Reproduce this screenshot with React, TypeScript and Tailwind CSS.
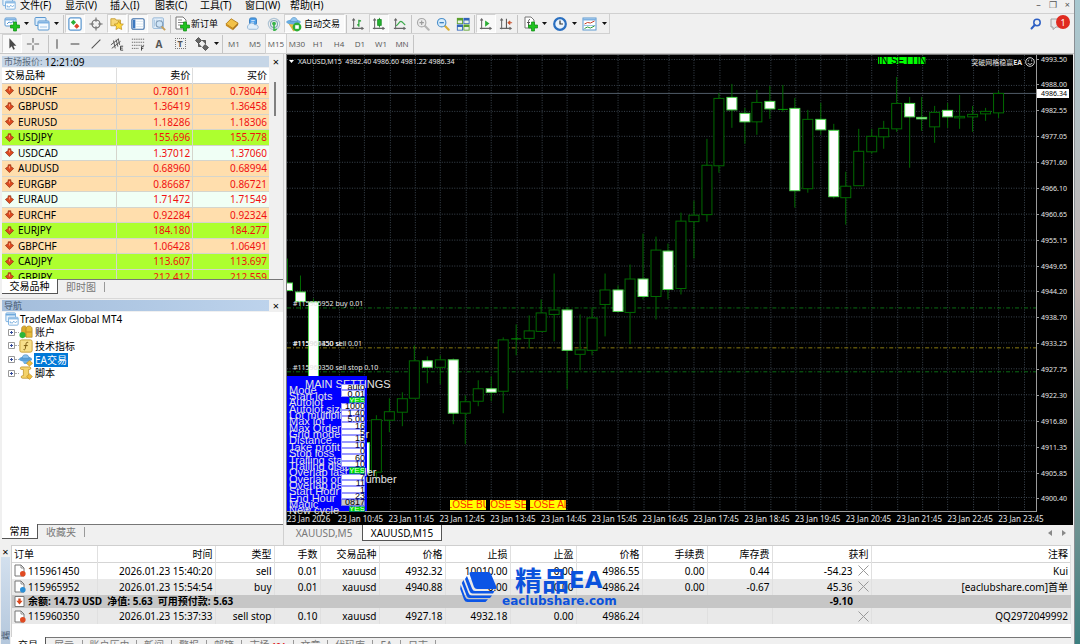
import React from "react";

const MENU = ["文件(F)", "显示(V)", "插入(I)", "图表(C)", "工具(T)", "窗口(W)", "帮助(H)"];

type Quote = [string, string, string, "down" | "jpy" | "flat"];
const QUOTES: Quote[] = [
  ["USDCHF", "0.78011", "0.78044", "down"],
  ["GBPUSD", "1.36419", "1.36458", "down"],
  ["EURUSD", "1.18286", "1.18306", "down"],
  ["USDJPY", "155.696", "155.778", "jpy"],
  ["USDCAD", "1.37012", "1.37060", "flat"],
  ["AUDUSD", "0.68960", "0.68994", "down"],
  ["EURGBP", "0.86687", "0.86721", "down"],
  ["EURAUD", "1.71472", "1.71549", "flat"],
  ["EURCHF", "0.92284", "0.92324", "down"],
  ["EURJPY", "184.180", "184.277", "jpy"],
  ["GBPCHF", "1.06428", "1.06491", "down"],
  ["CADJPY", "113.607", "113.697", "jpy"],
  ["GBPJPY", "212.412", "212.559", "jpy"],
];
const QUOTE_BG = { down: "bg-[#ffdead]", jpy: "bg-[#adff2f]", flat: "bg-[#f0fff5]" };

// body top, body bottom, wick top, wick bottom, filled
type Candle = [number, number, number, number, number] | null;
const CANDLES: Candle[] = [
  [283, 291, 259, 291, 1], [292, 302, 276, 310, 1], [302, 430, 299, 440, 1], null, null, null,
  [443, 474, 443, 476, 1], [420, 473, 416, 484, 0], [412, 421, 399, 433, 0], [399, 413, 393, 427, 0],
  [361, 399, 346, 399, 0], [361, 368, 357, 384, 1], [360, 368, 356, 385, 0], [360, 414, 359, 425, 1],
  [402, 414, 396, 445, 0], [389, 402, 381, 407, 0], [389, 393, 377, 402, 1], [340, 392, 338, 414, 0],
  [339, 339, 325, 356, 0], [331, 339, 316, 349, 0], [313, 332, 300, 332, 0], [310, 315, 274, 342, 0],
  [310, 351, 308, 390, 1], [350, 355, 315, 371, 0], [318, 351, 308, 356, 0], [290, 305, 274, 337, 0],
  [290, 312, 286, 313, 1], [279, 313, 265, 345, 0], [279, 297, 234, 300, 1], [250, 297, 237, 320, 0],
  [251, 290, 244, 300, 1], [221, 289, 213, 295, 0], [215, 222, 201, 259, 0], [165, 215, 139, 222, 0],
  [98, 166, 93, 173, 0], [97, 110, 84, 128, 1], [113, 122, 108, 144, 1], [102, 122, 90, 135, 0],
  [101, 109, 86, 119, 1], [109, 109, 85, 112, 0], [108, 191, 98, 208, 1], [119, 189, 110, 193, 0],
  [119, 130, 103, 135, 1], [130, 197, 124, 199, 1], [186, 198, 172, 225, 0], [151, 186, 129, 186, 0],
  [136, 152, 129, 154, 0], [128, 137, 121, 149, 0], [103, 129, 77, 132, 0], [103, 117, 97, 168, 1],
  [117, 119, 97, 131, 1], [112, 127, 106, 143, 0], [110, 117, 103, 128, 1], [116, 118, 95, 129, 0],
  [114, 117, 106, 132, 0], [111, 114, 108, 121, 0], [93, 113, 91, 118, 0],
];

const PRICES = ["4993.50", "4988.00", "4982.55", "4977.05", "4971.60", "4966.10", "4960.65", "4955.15", "4949.65",
  "4944.20", "4938.70", "4933.25", "4927.75", "4922.30", "4916.80", "4911.35", "4905.85", "4900.40"];
const TIMES = ["23 Jan 2026", "23 Jan 10:45", "23 Jan 11:45", "23 Jan 12:45", "23 Jan 13:45", "23 Jan 14:45",
  "23 Jan 15:45", "23 Jan 16:45", "23 Jan 17:45", "23 Jan 18:45", "23 Jan 19:45", "23 Jan 20:45", "23 Jan 21:45",
  "23 Jan 22:45", "23 Jan 23:45"];

const SETTINGS: [string, string][] = [
  ["Mode", "auto"], ["Start lots", "0.01"], ["Autolot", "YES"], ["Autolot size", "1000"], ["Lot multiplier", "1.40"],
  ["Max lot", "5.00"], ["Max Orders", "16"], ["Grid mode order", "5"], ["Distance", "15"], ["Take profit", "10"],
  ["Stop loss", "0"], ["Trailing start", "60"], ["Trailing distan", "10"], ["Overlap last order", "YES"],
  ["Overlap order number", "7"], ["Overlap perce", "11"], ["Start Hour", "1"], ["End Hour", "23"], ["Magic", "0817"],
  ["New cycle", "YES"],
];

function Ico({ children, big }: { children: React.ReactNode; big?: boolean }) {
  return (
    <svg viewBox="0 0 16 16" className={big ? "size-4 shrink-0" : "size-3.5 shrink-0"} aria-hidden="true">
      {children}
    </svg>
  );
}

const ChartWin = () => (
  <>
    <rect x="1" y="2" width="11" height="8" rx="1" fill="#fff" stroke="#5b97cf" />
    <path d="M1 3.5h11" stroke="#7fb2e2" strokeWidth="2" />
    <path d="M3 8l2-2 2 1 3-2" stroke="#5b97cf" fill="none" />
  </>
);
const Plus = () => <path d="M8.5 8h3V5h3v3h3v3h-3v3h-3v-3h-3z" transform="translate(-2 1)" fill="#1fc21f" stroke="#0b8a12" strokeWidth=".7" />;
const Axes = () => <path d="M3 2v12M1 13h13M1.5 4L3 2l1.5 2M12 11.5l2 1.5-2 1.5" stroke="#666" strokeWidth="1.2" fill="none" />;

const ICONS: Record<string, React.ReactNode> = {
  newChart: <><ChartWin /><Plus /></>,
  profiles: (
    <>
      <rect x="1" y="1.5" width="11" height="8" rx="1" fill="#dcecfa" stroke="#5b97cf" />
      <rect x="4" y="5" width="11" height="9" rx="1" fill="#f6fbff" stroke="#5b97cf" />
      <path d="M4 6.5h11" stroke="#7fb2e2" strokeWidth="2" />
      <path d="M6 11h7" stroke="#9fc5e8" />
    </>
  ),
  market: (
    <>
      <rect x="1" y="1" width="14" height="14" rx="2" fill="#fff" stroke="#5b97cf" strokeWidth="1.4" />
      <path d="M6.200 3l3 3-3 3-3-3z" fill="#2cae35" />
      <path d="M10 7.500l3 3-3 3-3-3z" fill="#e0452a" />
    </>
  ),
  target: (
    <>
      <circle cx="8" cy="8" r="4.6" fill="none" stroke="#666" strokeWidth="1.3" />
      <path d="M8 .5v5M8 10.500v5M.5 8h5M10.500 8h5" stroke="#666" strokeWidth="1.2" />
    </>
  ),
  star: (
    <>
      <path d="M1 2h5l1 1.500h5V10H1z" fill="#f6d777" stroke="#c39a30" />
      <path d="M10 4.500l1.700 3.200 3.600.5-2.600 2.500.7 3.600-3.400-1.700-3.200 1.700.6-3.600-2.600-2.500 3.600-.5z" fill="#ffd83c" stroke="#b98a1c" strokeWidth=".8" />
    </>
  ),
  terminal: (
    <>
      <rect x="1" y="2" width="14" height="12" rx="1.500" fill="#fff" stroke="#3c6ea8" strokeWidth="1.300" />
      <rect x="2" y="3" width="3" height="10" fill="#3c78c0" />
      <path d="M6 5h8M6 8h8M6 11h8" stroke="#d5e3f0" />
    </>
  ),
  tester: (
    <>
      <rect x="1" y="1" width="12" height="12" rx="1" fill="#e7f1fa" stroke="#86aed4" />
      <path d="M3 3v8M5.500 3v8M11 3v4" stroke="#9fc1e0" />
      <circle cx="8.500" cy="8" r="3.800" fill="#cfe5f7" stroke="#7d99b5" strokeWidth="1.200" />
      <path d="M11 11l4 4" stroke="#c8a05a" strokeWidth="2.200" />
    </>
  ),
  order: (
    <>
      <path d="M2 1h7l3 3v9H2z" fill="#fff" stroke="#777" />
      <path d="M4 4h4M4 6.500h6M4 9h3" stroke="#888" />
      <Plus />
    </>
  ),
  gold: (
    <>
      <path d="M1 8l6-6 8 5-6 6z" fill="#f2c148" stroke="#b07a16" />
      <path d="M1 8l8 5v2L1 10z" fill="#c98b1c" />
      <path d="M9 13l6-6v2l-6 6z" fill="#a86d10" />
    </>
  ),
  person: (
    <>
      <rect x="4" y="1" width="8" height="8" rx="2" fill="#4f9fe8" stroke="#2f78bd" />
      <path d="M6 4h4M6 6h3" stroke="#d8ecff" />
      <path d="M3 14a3 3 0 010-5 4 4 0 017 0 3 3 0 014 2.500A2.500 2.500 0 0112 14z" fill="#e2effa" stroke="#8fb3d6" />
    </>
  ),
  signal: (
    <>
      <circle cx="8" cy="8" r="6.500" fill="none" stroke="#b0c4d4" strokeWidth="1.300" />
      <circle cx="8" cy="8" r="4" fill="none" stroke="#7aa5b5" strokeWidth="1.300" />
      <circle cx="8" cy="7.500" r="2.200" fill="#39b54a" />
      <path d="M8 8v7.500a6 6 0 003-2" stroke="#39b54a" strokeWidth="1.800" fill="none" />
    </>
  ),
  auto: (
    <>
      <path d="M2.500 7h10l-1 5-4 3z" fill="#f0bd3e" stroke="#c8951d" strokeWidth=".6" />
      <ellipse cx="7.500" cy="6" rx="7.300" ry="2.600" fill="#69ace0" />
      <path d="M4.500 5.500C5 2.500 6 1.500 8 1.500s3 1 3.500 4z" fill="#8fc4ee" stroke="#4d8ec5" strokeWidth=".6" />
      <circle cx="11" cy="11" r="4.400" fill="#2cae35" />
      <rect x="9.200" y="9.200" width="3.600" height="3.600" fill="#fff" />
    </>
  ),
  bars: <><Axes /><path d="M9 3v8M7 9h2M9 4.500h2.500" stroke="#1a9c2a" strokeWidth="1.300" /></>,
  candle: <><Axes /><path d="M8.500 1v11" stroke="#168a22" /><rect x="6.500" y="3" width="4" height="6.500" fill="#25b52f" stroke="#168a22" /></>,
  line: <><Axes /><path d="M3.500 10C6 9 7 5 9 5s3 3 5 4" stroke="#3aa84a" strokeWidth="1.300" fill="none" /></>,
  zoomIn: (
    <>
      <path d="M10 10l4.500 4.500" stroke="#b5b5b5" strokeWidth="2.400" strokeLinecap="round" />
      <circle cx="6.500" cy="6.500" r="4.800" fill="#ececec" stroke="#a8a8a8" strokeWidth="1.300" />
      <path d="M4 6.500h5M6.500 4v5" stroke="#9a9a9a" strokeWidth="1.300" />
    </>
  ),
  zoomOut: (
    <>
      <path d="M10 10l4.500 4.500" stroke="#d9ad33" strokeWidth="2.400" strokeLinecap="round" />
      <circle cx="6.500" cy="6.500" r="4.800" fill="#d8edfb" stroke="#4b8fca" strokeWidth="1.300" />
      <path d="M4 6.500h5" stroke="#2f78bd" strokeWidth="1.400" />
    </>
  ),
  tile: (
    <>
      <rect x="1" y="1" width="7" height="7" fill="#5a9e2c" /><rect x="8.500" y="1" width="7" height="7" fill="#2f62b8" />
      <rect x="1" y="8.500" width="7" height="7" fill="#2f62b8" /><rect x="8.500" y="8.500" width="7" height="7" fill="#5a9e2c" />
      <path d="M2 4h5v3H2zM9.500 4h5v3h-5zM2 11.500h5v3H2zM9.500 11.500h5v3h-5z" fill="#e9f3e6" />
    </>
  ),
  scroll: <><Axes /><path d="M7 4v7l5-3.500z" fill="#2cae35" /></>,
  shift: <><Axes /><path d="M8.500 2v11" stroke="#555" strokeWidth="1.200" /><path d="M15 6.500h-4M12.500 4.500l-2.500 2 2.500 2z" stroke="#c8502a" fill="#c8502a" /></>,
  indicator: (
    <>
      <path d="M3 1h6l3 3v8H3z" fill="#fff" stroke="#777" />
      <path d="M8 3.500c-1.500 0-1.500 1-1.500 2v5M5 6.500h3" stroke="#555" fill="none" />
      <Plus />
    </>
  ),
  clock: (
    <>
      <circle cx="8" cy="8" r="5.800" fill="#eaf4fd" stroke="#2a6fc0" strokeWidth="2.200" />
      <path d="M8 4.500V8h3" stroke="#333" strokeWidth="1.200" fill="none" />
    </>
  ),
  template: (
    <>
      <rect x="1" y="2" width="13" height="12" fill="#fff" stroke="#5b97cf" />
      <path d="M1 3.500h13" stroke="#7fb2e2" strokeWidth="2" />
      <path d="M2.500 8l3-1.500 3 .5 4-2" stroke="#c8402a" fill="none" />
      <path d="M1 9.500h13" stroke="#9ec3e4" />
      <path d="M2.500 12.500l3-1.500 3 1 4-2" stroke="#2a9c3a" fill="none" />
    </>
  ),
  cursor: <path d="M5 1.500v11.500l2.700-2.500 1.800 4 1.800-.9-1.800-3.700H13z" fill="#4a4a4a" />,
  cross: <path d="M8 1v5.500M8 9.500V15M1 8h5.500M9.500 8H15" stroke="#666" strokeWidth="1.300" />,
  vline: <path d="M8 2.500v11" stroke="#555" strokeWidth="1.300" />,
  hline: <path d="M3 8h10" stroke="#555" strokeWidth="1.300" />,
  trend: <path d="M3 13L13 3" stroke="#555" strokeWidth="1.200" />,
  equi: (
    <>
      <path d="M1 9l9-7M2 13l10-8M4 4l2 9M7 3l2 8M9.500 2l1.500 7" stroke="#555" strokeWidth="1.100" fill="none" />
      <path d="M15 10.500h-3v4.500h3M12 12.700h2.500" stroke="#333" fill="none" />
    </>
  ),
  fibo: (
    <>
      <path d="M1 2.500h14M1 6h14M1 9.500h14M1 13h8" stroke="#666" strokeWidth="1.100" strokeDasharray="1.500 1" />
      <path d="M14.500 11h-2.500v4.500M12 13h2" stroke="#333" fill="none" />
    </>
  ),
  tool: <path d="M4.500 1.500l3 3-3 3-3-3zM11 8.500l3.500 3-3 3-3-3zM4.500 7v3.500h3M8 4.500h3.500V8" stroke="#444" fill="#555" fillOpacity=".9" strokeWidth=".8" />,
  logo: (
    <>
      <rect x="1" y="1" width="11" height="10" rx="1" fill="#e8f3fc" stroke="#6fa8dc" />
      <path d="M1 3h11" stroke="#6fa8dc" strokeWidth="2" />
      <rect x="4" y="6" width="11" height="9" rx="1" fill="#fff" stroke="#6fa8dc" />
      <path d="M4 7.500h11" stroke="#8fbde6" strokeWidth="2" />
      <path d="M6 13v-2l2 2 2-2.500 2 2 1.500-2" stroke="#6fa8dc" fill="none" />
    </>
  ),
  accounts: (
    <>
      <path d="M3 13V4c0-4 6-4 6 0v9z" fill="#d9a92c" stroke="#a87b14" strokeWidth=".7" />
      <path d="M8 14V4.500c0-4.500 7-4.500 7 0V14z" fill="#e8bc3c" stroke="#a87b14" strokeWidth=".7" />
      <path d="M8.500 8h6" stroke="#a87b14" strokeWidth=".8" />
      <circle cx="4" cy="11.500" r="3.500" fill="#2cb53a" />
    </>
  ),
  func: (
    <>
      <rect x="1" y="1" width="14" height="14" rx="2" fill="#f7df8a" stroke="#c39a30" />
      <path d="M10.500 4c-2-.8-2.300.5-2.500 2l-.8 5c-.2 1.300-1 1.500-2 1M5.500 7.500h4.500" stroke="#7a5b10" strokeWidth="1.100" fill="none" />
    </>
  ),
  hat: (
    <>
      <ellipse cx="7.500" cy="7" rx="7.300" ry="3" fill="#58a0da" />
      <path d="M3.500 6C4 3 5 2 7.500 2S11 3 11.500 6z" fill="#8cc3ee" stroke="#4586bd" strokeWidth=".7" />
      <path d="M4 9.500h7l-1 3H6z" fill="#6fb0e2" />
      <path d="M12 8.500l3.500 3.200L12 15l-3.500-3.300z" fill="#f0bd3e" stroke="#b98a1c" strokeWidth=".7" />
    </>
  ),
  script: (
    <>
      <path d="M3 1h9c2 0 2 3 0 3h-1v6l2 4H4c-2 0-2-3 0-3h1V4H3c-2 0-2-3 0-3z" fill="#f3d26a" stroke="#b98a1c" strokeWidth=".8" />
      <path d="M12 9l3.300 3L12 15.300 8.700 12z" fill="#f0bd3e" stroke="#b98a1c" strokeWidth=".7" />
    </>
  ),
};

function Caret() {
  return (
    <svg viewBox="0 0 5 3" className="h-[3px] w-[5px] shrink-0" aria-hidden="true">
      <path d="M0 0h5L2.500 3z" fill="#111" />
    </svg>
  );
}

function Tool({ icon, label, active, menu }: { icon: string; label: string; active?: boolean; menu?: boolean }) {
  return (
    <button
      type="button"
      aria-label={label}
      className={
        "flex h-[19px] shrink-0 items-center " +
        (menu ? "w-[30px] gap-1 pl-[3px] " : "w-5 justify-center ") +
        (active ? "border border-[#d2d2d2] border-r-white border-b-white bg-[#f9f9f9]" : "")
      }
    >
      <Ico big={menu}>{ICONS[icon]}</Ico>
      {menu && <Caret />}
    </button>
  );
}

const Sep = () => <div className="mx-px h-[18px] w-px shrink-0 bg-[#c4c4c4]" />;

function Toolbars() {
  return (
    <>
      <div className="flex h-[21px] shrink-0 items-center border-t border-[#d0d0d0]">
        <div className="flex h-full items-center border-r border-b border-[#d0d0d0] pl-px">
          <Tool icon="newChart" label="新图表" menu />
          <Tool icon="profiles" label="配置" menu />
          <div className="w-px" />
          <Sep />
          <div className="flex gap-px">
            <Tool icon="market" label="市场报价" active />
            <Tool icon="target" label="数据窗口" />
            <Tool icon="star" label="导航" active />
            <Tool icon="terminal" label="终端" active />
            <Tool icon="tester" label="策略测试" />
          </div>
          <Sep />
          <button type="button" className="flex h-[19px] w-[50px] items-center gap-px pl-0.5 text-[9px] leading-none whitespace-nowrap">
            <Ico big>{ICONS.order}</Ico>新订单
          </button>
          <div className="flex gap-px">
            <Tool icon="gold" label="MetaEditor" />
            <Tool icon="person" label="社区" />
            <Tool icon="signal" label="信号" />
          </div>
          <button type="button" className="flex h-[19px] w-[61px] items-center gap-0.5 border border-[#d2d2d2] border-r-white border-b-white bg-[#f9f9f9] pl-px text-[9px] leading-none whitespace-nowrap">
            <Ico big>{ICONS.auto}</Ico>自动交易
          </button>
          <Sep />
          <div className="flex gap-px">
            <Tool icon="bars" label="柱状图" />
            <Tool icon="candle" label="蜡烛图" active />
            <Tool icon="line" label="折线图" />
          </div>
          <Sep />
          <div className="flex">
            <Tool icon="zoomIn" label="放大" />
            <Tool icon="zoomOut" label="缩小" />
            <Tool icon="tile" label="平铺" />
          </div>
          <Sep />
          <div className="flex">
            <Tool icon="scroll" label="自动滚动" active />
            <Tool icon="shift" label="图表平移" />
          </div>
          <Sep />
          <Tool icon="indicator" label="指标" menu />
          <Tool icon="clock" label="周期" menu />
          <Tool icon="template" label="模板" menu />
        </div>
        <div className="ml-auto flex items-center gap-2 pr-1">
          <button type="button" aria-label="搜索">
            <svg viewBox="0 0 12 12" className="size-3" aria-hidden="true">
              <circle cx="7" cy="4.500" r="3.200" fill="none" stroke="#2d5fc4" strokeWidth="1.500" />
              <path d="M4.700 7L1.500 10.500" stroke="#2d5fc4" strokeWidth="2" strokeLinecap="round" />
            </svg>
          </button>
          <button type="button" aria-label="消息" className="relative flex h-[18px] w-5 items-center">
            <svg viewBox="0 0 14 12" className="h-3 w-3.5" aria-hidden="true">
              <path d="M1 1h12v8H6l-3 2.500V9H1z" fill="#e8e8e8" stroke="#a0a0a0" />
            </svg>
            <span className="absolute top-0 right-0 flex size-[14px] items-center justify-center rounded-full bg-[#e02b20] text-[9px] leading-none text-white">1</span>
          </button>
        </div>
      </div>
      <div className="flex h-[20px] shrink-0 items-center border-b border-[#c8c8c8] pl-0.5">
        <div className="flex items-center gap-px">
          <Tool icon="cursor" label="光标" active />
          <Tool icon="cross" label="十字线" />
        </div>
        <div className="w-1" />
        <Sep />
        <div className="flex items-center gap-px">
          <button type="button" aria-label="垂直线" className="flex h-[19px] w-3.5 items-center justify-center">
            <Ico>{ICONS.vline}</Ico>
          </button>
          <Tool icon="hline" label="水平线" />
          <Tool icon="trend" label="趋势线" />
          <Tool icon="equi" label="等距通道" />
          <Tool icon="fibo" label="斐波纳契" />
          <button type="button" className="w-5 text-[10px] leading-none font-bold text-[#555]">A</button>
          <button type="button" aria-label="文字标签" className="flex w-5 justify-center">
            <span className="flex size-[11px] items-center justify-center border border-dotted border-[#777] text-[9px] leading-none font-bold text-[#555]">T</span>
          </button>
          <Tool icon="tool" label="箭头" menu />
        </div>
        <Sep />
        <div className="flex items-center gap-px">
          {["M1", "M5", "M15", "M30", "H1", "H4", "D1", "W1", "MN"].map((p) => (
            <button
              key={p}
              type="button"
              className={
                "h-[19px] w-5 text-center font-['Open_Sans','Noto_Sans',sans-serif] text-[8px] leading-none font-medium text-[#555] " +
                (p === "M15" ? "bg-[#f9f9f9] outline outline-[#d2d2d2]" : "")
              }
            >
              {p}
            </button>
          ))}
        </div>
        <Sep />
      </div>
    </>
  );
}

function PanelTitle({ children, tone }: { children: React.ReactNode; tone: string }) {
  return (
    <div className="flex h-[13px] shrink-0 items-center">
      <div className={"flex h-[11px] flex-1 items-center pl-0.5 text-[9px] leading-none whitespace-pre " + tone}>{children}</div>
      <button type="button" aria-label="关闭" className="w-[14px] text-center text-[11px] leading-none">×</button>
    </div>
  );
}

function Tabs({ active, rest, width }: { active: string; rest: string; width: string }) {
  return (
    <div className="flex h-[15px] shrink-0 text-[10px] leading-none">
      <button type="button" className={"border-r border-b border-[#555] bg-white " + width}>{active}</button>
      <div className="flex flex-1 items-center border-t border-[#777]">
        <button type="button" className="border-r border-[#999] px-2 text-[#777]">{rest}</button>
      </div>
    </div>
  );
}

function MarketWatch() {
  return (
    <section className="flex h-[240px] shrink-0 flex-col pt-px pl-0.5">
      <PanelTitle tone="bg-[#c6d6e7] text-[#5a6a7c]">
        市场报价: <span className="text-[10px] text-black">12:21:09</span>
      </PanelTitle>
      <div className="flex min-h-0 flex-1 overflow-hidden bg-[#f0f0f0]">
        <div className="min-w-0 flex-1">
          <table className="h-[217px] w-full table-fixed border-collapse bg-white text-[10px] leading-none">
            <colgroup>
              <col className="w-[114px]" />
              <col className="w-[76px]" />
              <col className="w-[76px]" />
            </colgroup>
            <thead>
              <tr className="h-[15px] border-b border-[#ccc]">
                <th className="border-r border-[#ddd] p-0 pl-[3px] text-left font-normal">交易品种</th>
                <th className="border-r border-[#ddd] p-0 pr-0.5 text-right font-normal">卖价</th>
                <th className="p-0 pr-0.5 text-right font-normal">买价</th>
              </tr>
            </thead>
            <tbody>
              {QUOTES.map(([s, bid, ask, kind]) => (
                <tr key={s} className={"border-b border-[#d5d5cc] " + QUOTE_BG[kind]}>
                  <td className="border-r border-[#d5d5cc] p-0 pl-[3px]">
                    <span className="flex items-center gap-1">
                      <svg viewBox="0 0 9 9" className="size-[9px]" aria-hidden="true">
                        <path d="M3.200.8h2.600v1.700L8.600 4.500 4.500 8.600.4 4.500l2.800-2z" fill="#dd4a20" stroke="#8e2c10" strokeWidth=".7" />
                        <path d="M4.500 2v2.500" stroke="#ff9a70" />
                      </svg>
                      {s}
                    </span>
                  </td>
                  <td className="border-r border-[#d5d5cc] p-0 pr-0.5 text-right text-[#f01010]">{bid}</td>
                  <td className="p-0 pr-0.5 text-right text-[#f01010]">{ask}</td>
                </tr>
              ))}
            </tbody>
          </table>
        </div>
        <div className="w-[14px] shrink-0 pt-[14px]">
          <div className="ml-[5px] h-[34px] w-0.5 bg-[#808080]" />
        </div>
      </div>
      <Tabs active="交易品种" rest="即时图" width="w-14" />
    </section>
  );
}

const TREE: [string, string, boolean][] = [
  ["accounts", "账户", false],
  ["func", "技术指标", false],
  ["hat", "EA交易", true],
  ["script", "脚本", false],
];

function Navigator() {
  return (
    <section className="mt-1 flex min-h-0 flex-1 flex-col border-t border-[#d8d8d8] pl-0.5">
      <PanelTitle tone="bg-linear-to-r from-[#a3bddb] to-[#bdd3ec] text-[#44566b]">导航</PanelTitle>
      <div className="min-h-0 flex-1 bg-white">
        <ul className="grid h-[68px] grid-rows-5 pl-[3px] text-[10px] leading-none">
          <li className="flex items-center gap-px">
            <Ico>{ICONS.logo}</Ico>TradeMax Global MT4
          </li>
          {TREE.map(([icon, name, on]) => (
            <li key={name} className="flex items-center pl-[3px]">
              <svg viewBox="0 0 7 7" className="size-[7px]" aria-hidden="true">
                <path d="M.5.5h6v6h-6z" fill="#fff" stroke="#999" />
                <path d="M2 3.500h3M3.500 2v3" stroke="#334a9a" />
              </svg>
              <span className="w-1 border-t border-dotted border-[#aaa]" />
              <svg viewBox="0 0 16 16" className="size-[14px] shrink-0" aria-hidden="true">{ICONS[icon]}</svg>
              <span className={on ? "ml-px bg-[#0078d7] px-px py-0.5 text-white" : "ml-0.5"}>{name}</span>
            </li>
          ))}
        </ul>
      </div>
      <Tabs active="常用" rest="收藏夹" width="w-9" />
    </section>
  );
}

function Plot() {
  const cols = Array.from({ length: 29 }, (_, i) => Math.round(313.3 + i * 25.4) + 0.5);
  const rows = PRICES.map((_, i) => Math.round(59 + i * 25.83) + 0.5);
  return (
    <svg viewBox="287 55 750 457" preserveAspectRatio="none" className="absolute inset-0 size-full" aria-hidden="true">
      <g stroke="#3b454f" strokeDasharray="1 1.500">
        {cols.map((x) => <path key={x} d={`M${x} 55V512`} />)}
        {rows.map((y) => <path key={y} d={`M287 ${y}H1037`} />)}
      </g>
      <path d="M287 93.500H1037" stroke="#505c68" />
      <path d="M287 308.500H1037M287 372.500H1037" stroke="#0b6b14" strokeDasharray="4 2 1 2" />
      <path d="M287 348.500H1037" stroke="#8b7c12" strokeDasharray="4 2 1 2" />
      {CANDLES.map((c, i) => {
        if (!c) return null;
        const x = Math.round(287.4 + i * 12.7) + 0.5;
        const [top, bottom, high, low, filled] = c;
        return (
          <g key={i} stroke={filled ? "#4fd84f" : "#006a00"}>
            <path d={`M${x} ${high}V${low}`} stroke="#006a00" />
            {bottom - top < 1 ? (
              <path d={`M${x - 5} ${top + 0.5}h10`} stroke="#00a000" />
            ) : (
              <rect x={x - 5} y={top + 0.5} width="10" height={bottom - top - 0.5} fill={filled ? "#fff" : "#000"} />
            )}
          </g>
        );
      })}
    </svg>
  );
}

function SettingsPanel() {
  return (
    <div className="absolute top-[321px] bottom-0 left-0 w-20 bg-[#0000ff] font-['Liberation_Sans',Arial,sans-serif] text-[11px] text-[#e4e4e4]">
      <div className="absolute top-[2px] left-[18px] leading-3 whitespace-nowrap">MAIN SETTINGS</div>
      <div className="absolute top-[11px] left-0.5 grid h-[127px] grid-rows-[repeat(20,minmax(0,1fr))]">
        {SETTINGS.map(([name], i) => (
          <label key={name} htmlFor={`set-${i}`} className="flex h-0 items-center self-center whitespace-nowrap">{name}</label>
        ))}
      </div>
      <div className="absolute top-2 left-[54px] grid h-[128px] w-6 grid-rows-[repeat(20,minmax(0,1fr))] justify-items-end">
        {SETTINGS.map(([name, value], i) => (
          <input
            key={name}
            id={`set-${i}`}
            defaultValue={value}
            className={
              "h-full min-h-0 p-0 text-right leading-none outline -outline-offset-1 outline-[#0000ff]/40 " +
              (value === "YES"
                ? "w-4 bg-[#00e000] text-[8px] text-[#eaffea]"
                : value === "0817"
                  ? "w-full bg-[#c8c8c8] text-[9px] text-black"
                  : "w-full bg-white text-[9px] text-black")
            }
          />
        ))}
      </div>
    </div>
  );
}

function Chart() {
  return (
    <section className="flex min-w-0 flex-1 flex-col">
      <div className="mr-px flex min-h-0 flex-1 flex-col border-t border-l border-[#7a7a7a] bg-black text-[7px] leading-none text-[#e6e6e6]">
        <div className="flex min-h-0 flex-1">
          <div className="relative min-w-0 flex-1 border-r border-b border-[#9a9a9a]">
            <Plot />
            <div className="absolute top-0.5 left-[2px] flex h-2 items-center gap-1 whitespace-pre">
              <svg viewBox="0 0 5 3" className="h-[3px] w-[5px]" aria-hidden="true"><path d="M0 0h5L2.500 3z" fill="#fff" /></svg>
              XAUUSD,M15  4982.40 4986.60 4981.22 4986.34
            </div>
            <div className="absolute top-[2px] right-[110px] flex h-[7px] w-12 items-center justify-center overflow-hidden bg-[#00ff00] font-['Liberation_Sans',sans-serif] text-[10px] whitespace-nowrap text-black">
              MAIN SETTINGS
            </div>
            <div className="absolute top-[2px] right-px flex h-2.5 items-center gap-[3px] text-[7px]">
              <span>突破网格稳赢<b>EA</b></span>
              <svg viewBox="0 0 10 10" className="size-2.5" fill="none" stroke="#e8e8e8" aria-hidden="true">
                <circle cx="5" cy="5" r="4.300" strokeWidth=".9" />
                <path d="M3.300 3.200v1.200M6.700 3.200v1.200M2.800 6c.7 1.800 3.700 1.800 4.400 0" strokeWidth=".9" />
              </svg>
            </div>
            <div className="absolute top-[245px] left-1.5 whitespace-nowrap">#115965952 buy 0.01</div>
            <div className="absolute top-[285px] left-1.5 whitespace-nowrap">#115961450 sell 0.01</div>
            <div className="absolute top-[285px] left-1.5 whitespace-nowrap">#115960350 sl</div>
            <div className="absolute top-[309px] left-1.5 whitespace-nowrap">#115960350 sell stop 0.10</div>
            <SettingsPanel />
            <div className="absolute bottom-px left-[163px] flex gap-1">
              {["CLOSE BUY", "CLOSE SELL", "CLOSE ALL"].map((t) => (
                <button key={t} type="button" className="flex h-2.5 w-9 items-center justify-center overflow-hidden bg-[#ffff00] font-['Liberation_Sans',sans-serif] text-[10px] leading-none whitespace-nowrap text-[#ff2a00]">
                  {t}
                </button>
              ))}
            </div>
          </div>
          <div className="relative flex w-9 shrink-0 flex-col justify-between pb-[9px]">
            {PRICES.map((p) => (
              <div key={p} className="flex h-2 items-center">
                <span className="mr-0.5 h-px w-0.5 bg-[#9a9a9a]" />
                {p}
              </div>
            ))}
            <div className="absolute top-[34px] left-0 flex h-[9px] w-[32px] items-center bg-white pl-1 text-black">4986.34</div>
          </div>
        </div>
        <div className="mr-6 grid h-[13px] shrink-0 grid-cols-[repeat(15,minmax(0,1fr))] items-center text-[8px]">
          {TIMES.map((t) => <span key={t} className="whitespace-nowrap">{t}</span>)}
        </div>
      </div>
      <div className="flex h-5 shrink-0 items-start text-[10px] leading-none">
        <button type="button" className="h-4 w-[76px] text-[#777]">XAUUSD,M5</button>
        <button type="button" className="h-4 w-20 border border-t-0 border-[#555] bg-white">XAUUSD,M15</button>
        <div className="ml-auto flex h-4 items-center gap-2.5 pr-2">
          <svg viewBox="0 0 4 6" className="h-1.5 w-1" aria-hidden="true"><path d="M4 0v6L0 3z" fill="#888" /></svg>
          <svg viewBox="0 0 4 6" className="h-1.5 w-1" aria-hidden="true"><path d="M0 0v6l4-3z" fill="#888" /></svg>
        </div>
      </div>
    </section>
  );
}

const HEAD = ["订单", "时间", "类型", "手数", "交易品种", "价格", "止损", "止盈", "价格", "手续费", "库存费", "获利", "注释"];
const ORDERS: { kind: "sell" | "buy"; cells: string[] }[] = [
  { kind: "sell", cells: ["115961450", "2026.01.23 15:40:20", "sell", "0.01", "xauusd", "4932.32", "10010.00", "0.00", "4986.55", "0.00", "0.44", "-54.23", "Kui"] },
  { kind: "buy", cells: ["115965952", "2026.01.23 15:54:54", "buy", "0.01", "xauusd", "4940.88", "0.00", "0.00", "4986.24", "0.00", "-0.67", "45.36", "[eaclubshare.com]首单"] },
  { kind: "sell", cells: ["115960350", "2026.01.23 15:37:33", "sell stop", "0.10", "xauusd", "4927.18", "4932.18", "0.00", "4986.24", "", "", "", "QQ2972049992"] },
];

function OrderRow({ order, shade }: { order: (typeof ORDERS)[number]; shade: string }) {
  return (
    <tr className={shade}>
      {order.cells.map((v, i) => (
        <td key={i} className={"border-r border-[#e0e0e0] p-0 whitespace-nowrap " + (i ? "pr-0.5 text-right" : "pl-0.5")}>
          {i === 0 ? (
            <span className="flex items-center gap-0.5">
              <svg viewBox="0 0 12 13" className="h-[13px] w-3" aria-hidden="true">
                <path d="M1 1h6l3 3v8H1z" fill="#fff" stroke="#777" />
                <path d="M7 1v3h3" fill="none" stroke="#777" strokeWidth=".8" />
                <circle cx="8.800" cy="9.800" r="2.800" fill={order.kind === "sell" ? "#e04a22" : "#2b8fd6"} />
              </svg>
              {v}
            </span>
          ) : i === 11 ? (
            <span className="flex items-center justify-end gap-[5px]">
              {v}
              <svg viewBox="0 0 11 11" className="size-[11px]" aria-hidden="true"><path d="M.5.5l10 10M10.500.5l-10 10" stroke="#999" /></svg>
            </span>
          ) : (
            v
          )}
        </td>
      ))}
    </tr>
  );
}

const BOTTOM: [string, string][] = [
  ["展示", "w-[37px]"], ["账户历史", "w-[54px]"], ["新闻", "w-[35px]"], ["警报", "w-[35px]"], ["邮箱", "w-[35px]"],
  ["市场", "w-[52px]"], ["文章", "w-[34px]"], ["代码库", "w-[45px]"], ["EA", "w-7"], ["日志", "w-[35px]"],
];

function Terminal() {
  return (
    <section className="relative flex h-[99px] shrink-0 overflow-hidden">
      <div className="flex w-[11px] shrink-0 flex-col">
        <button type="button" aria-label="关闭" className="h-3 text-[11px] leading-none">×</button>
        <div className="relative mr-px ml-px flex-1 overflow-hidden bg-linear-to-b from-[#d3e0ee] to-[#b4c7dc]">
          <span className="absolute top-[74px] left-0 -rotate-90 text-[9px] leading-none text-[#44566b]">端</span>
        </div>
      </div>
      <div className="mr-[3px] flex min-w-0 flex-1 flex-col">
        <div className="h-[92px] shrink-0 border-t border-l border-[#cfcfcf] bg-white">
          <table className="h-[78px] w-full table-fixed border-collapse text-[10px] leading-none">
            <colgroup>
              <col className="w-[85px]" /><col className="w-[118px]" /><col className="w-[59px]" /><col className="w-[46px]" />
              <col className="w-[59px]" /><col className="w-[66px]" /><col className="w-[65px]" /><col className="w-[66px]" />
              <col className="w-[66px]" /><col className="w-[65px]" /><col className="w-[65px]" /><col className="w-[99px]" /><col />
            </colgroup>
            <thead>
              <tr className="h-4 border-b border-[#d5d5d5]">
                {HEAD.map((h, i) => (
                  <th key={i} className={"border-r border-[#e0e0e0] p-0 font-normal whitespace-nowrap " + (i ? "pr-0.5 text-right" : "pl-0.5 text-left")}>{h}</th>
                ))}
              </tr>
            </thead>
            <tbody>
              <OrderRow order={ORDERS[0]} shade="bg-white" />
              <OrderRow order={ORDERS[1]} shade="bg-[#e9e9e9]" />
              <tr className="bg-[#c6c6c6] font-bold">
                <td colSpan={11} className="p-0 pl-0.5">
                  <span className="flex items-center gap-[3px] text-[10px] whitespace-pre">
                    <svg viewBox="0 0 11 11" className="size-[11px]" aria-hidden="true">
                      <path d="M1 .5h9v10H1z" fill="#fff" stroke="#777" />
                      <path d="M4.300 2.500h2.400v2.300h2L5.500 8.500 2.300 4.800h2z" fill="#d9481e" />
                    </svg>
                    余额: 14.73 USD  净值: 5.63  可用预付款: 5.63
                  </span>
                </td>
                <td className="p-0 pr-[18px] text-right">-9.10</td>
                <td className="p-0" />
              </tr>
              <OrderRow order={ORDERS[2]} shade="bg-[#e9e9e9]" />
            </tbody>
          </table>
        </div>
        <div className="flex h-[15px] shrink-0 items-center text-[10px] leading-none text-[#777]">
          <button type="button" className="h-full w-[35px] shrink-0 border-r border-[#555] bg-white text-black">交易</button>
          <div className="flex h-full flex-1 items-center border-t border-[#777]">
            {BOTTOM.map(([t, w]) => (
              <button key={t} type="button" className={"shrink-0 border-r border-[#999] whitespace-nowrap " + w}>
                {t}
                {t === "市场" && <span className="pl-0.5 text-[8px] leading-none font-bold text-[#e02020]">184</span>}
              </button>
            ))}
          </div>
        </div>
      </div>
      <div className="pointer-events-none absolute top-[27px] left-[460px] text-[#0b55dc]">
        <svg viewBox="0 0 38 30" className="h-[30px] w-[38px]" aria-hidden="true">
          <path d="M11 0h17q2 0 3 2l5.500 13q.5 2-1 2H17q-2 0-3-2L9.500 2Q9 0 11 0z" fill="#0b55e6" />
          <path d="M7 4l5 12.500q1 2.500 3 2.500h19.500l-1.500 2.500H12.500q-2 0-3-2.500L5 7z" fill="#0b55e6" />
          <path d="M3.500 8l5 13q1 2.500 3 2.500h20.500L30 26H9.500q-2 0-3-2.500L1.800 11z" fill="#0b55e6" />
          <path d="M.7 13l4.600 12q1 2.300 3 2.300H28L25.500 30H7.500q-2.500 0-3.500-2.500L.2 17z" fill="#0b55e6" />
        </svg>
      </div>
      <div className="pointer-events-none absolute top-[22px] left-[502px] flex flex-col font-bold text-[#0b52dc]">
        <div className="flex items-center pl-[13px] text-[27px] leading-[27px]">
          精品<span className="font-['DejaVu_Sans',sans-serif] text-[23px]">EA</span>
        </div>
        <div className="font-['DejaVu_Sans',sans-serif] text-[12px] leading-[14px]">eaclubshare.com</div>
      </div>
    </section>
  );
}

export default function App() {
  return (
    <div className="flex h-screen overflow-hidden bg-[#f0f0f0] font-['Noto_Sans','Noto_Sans_CJK_SC',sans-serif] text-black">
      <main className="flex min-w-0 flex-1 flex-col">
        <header className="flex h-[13px] shrink-0 items-start overflow-hidden">
          <span className="-mt-1 w-[20px] pl-0.5"><Ico>{ICONS.logo}</Ico></span>
          <nav className="flex text-[10px] leading-[10px]">
            {MENU.map((m) => (
              <button key={m} type="button" className="w-[45px] text-left whitespace-nowrap">{m}</button>
            ))}
          </nav>
          <div className="ml-auto flex items-center gap-2 pr-1 text-[9px] leading-[9px] text-[#555]">
            <button type="button" aria-label="最小化">–</button>
            <button type="button" aria-label="还原">❐</button>
            <button type="button" aria-label="关闭">×</button>
          </div>
        </header>
        <Toolbars />
        <div className="flex min-h-0 flex-1">
          <aside className="mr-0.5 flex w-[284px] shrink-0 flex-col border-r border-[#d0d0d0] pb-1.5">
            <MarketWatch />
            <Navigator />
          </aside>
          <Chart />
        </div>
        <Terminal />
      </main>
      <div className="w-[6px] shrink-0 border-l border-[#8a8f94] bg-linear-to-b from-[#a8c8d0] from-0% via-[#c4b6b4] via-45% to-[#3c7f80]" />
    </div>
  );
}
